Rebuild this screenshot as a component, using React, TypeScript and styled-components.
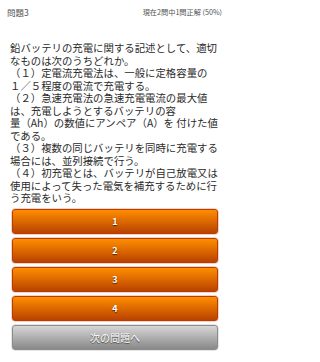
import styled, { createGlobalStyle } from "styled-components";

const GlobalStyle = createGlobalStyle`
  html, body {
    margin: 0;
    padding: 0;
    background: #ffffff;
  }
  body {
    font-family: "Noto Sans CJK JP", "Noto Sans", sans-serif;
  }
`;

const Screen = styled.div`
  width: 230px;
  height: 362px;
  background: #ffffff;
  overflow: hidden;
`;

const Header = styled.div`
  display: flex;
  justify-content: space-between;
  align-items: center;
  height: 24px;
  padding: 0 8px 0 7px;
  color: #555555;
`;

const HeaderText = styled.span<{ $size: number }>`
  font-size: ${(p) => p.$size}px;
`;

const Question = styled.div`
  margin-top: 18px;
  padding-left: 10px;
  font-size: 10.4px;
  line-height: 12.5px;
  color: #2a2a2a;
`;

const Line = styled.div`
  white-space: nowrap;
`;

const Choices = styled.div`
  display: flex;
  flex-direction: column;
  gap: 4.5px;
  margin-top: 4.75px;
  padding: 0 12px;
`;

const AnswerButton = styled.button<{ $variant?: "orange" | "gray" }>`
  height: 24.5px;
  width: 100%;
  border-radius: 3px;
  border: 1px solid ${(p) => (p.$variant === "gray" ? "#8c8c8c" : "#b83c00")};
  background: ${(p) =>
    p.$variant === "gray"
      ? "linear-gradient(to bottom, #d6d6d6, #888888)"
      : "linear-gradient(to bottom, #ff8e00, #b84200)"};
  box-shadow: 0 0 0 0.5px ${(p) => (p.$variant === "gray" ? "#cccccc" : "#eaa595")};
  color: #ffffff;
  font-family: "Noto Sans CJK JP", "DejaVu Sans", sans-serif;
  font-size: ${(p) => (p.$variant === "gray" ? "10px" : "9px")};
  font-weight: ${(p) => (p.$variant === "gray" ? 400 : 700)};
  text-shadow: 0 0.5px 1px rgba(0, 0, 0, 0.6);
  padding: 0;
  display: flex;
  align-items: center;
  justify-content: center;
`;

const lines = [
  "鉛バッテリの充電に関する記述として、適切",
  "なものは次のうちどれか。",
  "（１）定電流充電法は、一般に定格容量の",
  "１／５程度の電流で充電する。",
  "（２）急速充電法の急速充電電流の最大値",
  "は、充電しようとするバッテリの容",
  "量（Ah）の数値にアンペア（A）を 付けた値",
  "である。",
  "（３）複数の同じバッテリを同時に充電する",
  "場合には、並列接続で行う。",
  "（４）初充電とは、バッテリが自己放電又は",
  "使用によって失った電気を補充するために行",
  "う充電をいう。",
];

const App = () => {
  return (
    <Screen>
      <GlobalStyle />
      <Header>
        <HeaderText $size={8.5}>問題3</HeaderText>
        <HeaderText $size={7.2}>現在2問中1問正解 (50%)</HeaderText>
      </Header>
      <Question>
        {lines.map((l, i) => (
          <Line key={i}>{l}</Line>
        ))}
      </Question>
      <Choices>
        {[1, 2, 3, 4].map((n) => (
          <AnswerButton key={n}>{n}</AnswerButton>
        ))}
        <AnswerButton $variant="gray">次の問題へ</AnswerButton>
      </Choices>
    </Screen>
  );
};

export default App;
